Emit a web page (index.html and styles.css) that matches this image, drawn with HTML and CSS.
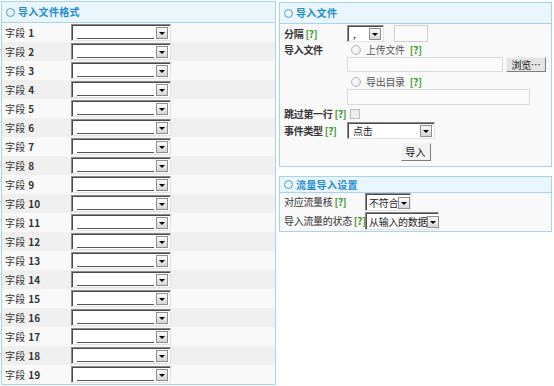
FILE: index.html
```html
<!DOCTYPE html>
<html lang="zh">
    <head>
        <title>导入</title>
        <meta charset="utf-8">
        <link rel="stylesheet" href="styles.css">
    </head>
    <body>
        <div class="page">
            <div class="panel left">
                <div class="head"><i class="dot"></i>导入文件格式</div>
                <div class="fields">
                    <div class="row"><span class="lbl">字段 <b>1</b></span><div class="sel w100"><span class="blank"></span><i class="arr"></i></div></div>
                    <div class="row"><span class="lbl">字段 <b>2</b></span><div class="sel w100"><span class="blank"></span><i class="arr"></i></div></div>
                    <div class="row"><span class="lbl">字段 <b>3</b></span><div class="sel w100"><span class="blank"></span><i class="arr"></i></div></div>
                    <div class="row"><span class="lbl">字段 <b>4</b></span><div class="sel w100"><span class="blank"></span><i class="arr"></i></div></div>
                    <div class="row"><span class="lbl">字段 <b>5</b></span><div class="sel w100"><span class="blank"></span><i class="arr"></i></div></div>
                    <div class="row"><span class="lbl">字段 <b>6</b></span><div class="sel w100"><span class="blank"></span><i class="arr"></i></div></div>
                    <div class="row"><span class="lbl">字段 <b>7</b></span><div class="sel w100"><span class="blank"></span><i class="arr"></i></div></div>
                    <div class="row"><span class="lbl">字段 <b>8</b></span><div class="sel w100"><span class="blank"></span><i class="arr"></i></div></div>
                    <div class="row"><span class="lbl">字段 <b>9</b></span><div class="sel w100"><span class="blank"></span><i class="arr"></i></div></div>
                    <div class="row"><span class="lbl">字段 <b>10</b></span><div class="sel w100"><span class="blank"></span><i class="arr"></i></div></div>
                    <div class="row"><span class="lbl">字段 <b>11</b></span><div class="sel w100"><span class="blank"></span><i class="arr"></i></div></div>
                    <div class="row"><span class="lbl">字段 <b>12</b></span><div class="sel w100"><span class="blank"></span><i class="arr"></i></div></div>
                    <div class="row"><span class="lbl">字段 <b>13</b></span><div class="sel w100"><span class="blank"></span><i class="arr"></i></div></div>
                    <div class="row"><span class="lbl">字段 <b>14</b></span><div class="sel w100"><span class="blank"></span><i class="arr"></i></div></div>
                    <div class="row"><span class="lbl">字段 <b>15</b></span><div class="sel w100"><span class="blank"></span><i class="arr"></i></div></div>
                    <div class="row"><span class="lbl">字段 <b>16</b></span><div class="sel w100"><span class="blank"></span><i class="arr"></i></div></div>
                    <div class="row"><span class="lbl">字段 <b>17</b></span><div class="sel w100"><span class="blank"></span><i class="arr"></i></div></div>
                    <div class="row"><span class="lbl">字段 <b>18</b></span><div class="sel w100"><span class="blank"></span><i class="arr"></i></div></div>
                    <div class="row"><span class="lbl">字段 <b>19</b></span><div class="sel w100"><span class="blank"></span><i class="arr"></i></div></div>
                </div>
            </div>

            <div class="side">
                <div class="panel import">
                    <div class="head"><i class="dot"></i>导入文件</div>
                    <div class="form">
                        <span class="flbl">分隔 <em>[?]</em></span>
                        <div class="line">
                            <div class="sel w37"><span class="val">,</span><i class="arr"></i></div>
                            <span class="txt w34"></span>
                        </div>

                        <span class="flbl top">导入文件</span>
                        <div class="stack">
                            <label class="radio"><i class="rad"></i>上传文件 <em>[?]</em></label>
                            <div class="fileline">
                                <span class="txt w156"></span>
                                <span class="btn browse">浏览…</span>
                            </div>
                            <label class="radio second"><i class="rad"></i>导出目录 <em>[?]</em></label>
                            <span class="txt w183"></span>
                        </div>

                        <span class="flbl short">跳过第一行 <em>[?]</em></span>
                        <div class="line short"><i class="chk"></i></div>

                        <span class="flbl">事件类型 <em>[?]</em></span>
                        <div class="line">
                            <div class="sel w88"><span class="val">点击</span><i class="arr"></i></div>
                        </div>
                    </div>
                    <div class="submit"><span class="btn go">导入</span></div>
                </div>

                <div class="panel flow">
                    <div class="head"><i class="dot"></i>流量导入设置</div>
                    <div class="form2">
                        <span class="plain">对应流量核 <em>[?]</em></span>
                        <div class="sel w46"><span class="val">不符合</span><i class="arr"></i></div>
                        <span class="plain">导入流量的状态 <em>[?]</em></span>
                        <div class="sel w72"><span class="val">从输入的数据</span><i class="arr"></i></div>
                    </div>
                </div>
            </div>
        </div>
    </body>
</html>
```

FILE: styles.css
```css
body {
    margin: 0;
    background: #fff;
    font: 10px/14px "Noto Sans CJK SC", "DejaVu Sans", sans-serif;
    letter-spacing: 0.3px;
    color: #333;
}
.page {
    display: flex;
    gap: 3px;
    padding: 1px 0 0 1px;
}
.panel {
    border: 1px solid #a6d3ef;
    background: #f9f9f9;
    box-sizing: border-box;
}
.left {
    width: 275px;
}
.side {
    width: 273px;
    display: flex;
    flex-direction: column;
    gap: 9px;
    padding-top: 1px;
}
.head {
    height: 20px;
    display: flex;
    align-items: center;
    gap: 3px;
    padding-left: 4px;
    border-bottom: 1px solid #a6d3ef;
    background: repeating-conic-gradient(#e3f3fb 0 25%, #eff9fd 0 50%) 0 0/2px 2px;
    color: #1f8ccd;
    font-weight: bold;
    white-space: nowrap;
}
.flow .head {
    height: 15px;
}
.dot {
    width: 7px;
    height: 7px;
    border-radius: 50%;
    border: 1px solid #4a9fd6;
    background: radial-gradient(circle at 40% 40%, #fff, #cfe6f5);
}
.row {
    height: 19px;
    display: flex;
    align-items: center;
    padding-left: 3px;
}
.row:nth-child(even) {
    background: repeating-conic-gradient(#ebebeb 0 25%, #f4f4f4 0 50%) 0 0/2px 2px;
}
.lbl {
    width: 66px;
    white-space: nowrap;
}
.lbl b {
    color: #333;
}

/* fake select */
.sel {
    display: inline-flex;
    align-items: center;
    height: 17px;
    box-sizing: border-box;
    background: #fff;
    border: 1px solid;
    border-color: #8a8a8a #e2e2e2 #e2e2e2 #8a8a8a;
    box-shadow: inset 1px 1px 0 #4a4a4a;
    padding: 1px 2px 0 5px;
}
.sel .blank {
    flex: 1;
    height: 10px;
    border-bottom: 1px solid #555;
    margin-right: 2px;
}
.sel .val {
    flex: 1;
    white-space: nowrap;
    color: #222;
}
.arr {
    flex: none;
    width: 12px;
    height: 12px;
    box-sizing: border-box;
    border: 1px solid #8f8f8f;
    background: linear-gradient(#fbfbfb, #d6d6d6);
    display: flex;
    align-items: center;
    justify-content: center;
}
.arr::after {
    content: "";
    border-left: 3px solid transparent;
    border-right: 3px solid transparent;
    border-top: 3px solid #000;
    margin-top: 1px;
}
.w100 { width: 100px; }
.w37 { width: 37px; }
.w88 { width: 88px; }
.w46 { width: 46px; padding-left: 3px; }
.w72 { width: 74px; padding-left: 3px; }

em {
    font-style: normal;
    font-weight: bold;
    color: #3a9a24;
}
.form {
    display: grid;
    grid-template-columns: 63px 1fr;
    row-gap: 1px;
    padding: 1px 0 0 4px;
    letter-spacing: -0.3px;
}
.flbl {
    font-weight: bold;
    line-height: 17px;
    white-space: nowrap;
}
.flbl.top {
    line-height: 14px;
}
.flbl.short {
    line-height: 15px;
}
.line {
    display: flex;
    align-items: center;
    gap: 3px;
    height: 17px;
}
.line.short {
    height: 15px;
}
.line .w34 {
    margin-left: 7px;
}
.stack {
    display: flex;
    flex-direction: column;
}
.fileline {
    display: flex;
    align-items: center;
    gap: 3px;
}
.txt {
    display: inline-block;
    height: 15px;
    box-sizing: border-box;
    border: 1px solid #dadada;
    background: #fafafa;
}
.w34 { width: 34px; height: 17px; border-color: #cfcfcf; }
.w156 { width: 156px; }
.w183 { width: 183px; height: 16px; }
.radio {
    display: flex;
    align-items: center;
    gap: 5px;
    padding-left: 4px;
    height: 14px;
    color: #555;
    white-space: nowrap;
}
.radio.second {
    margin-top: 3px;
}
.rad {
    width: 8px;
    height: 8px;
    border-radius: 50%;
    border: 1px solid #b8b8b8;
    background: radial-gradient(circle at 40% 40%, #fff, #dcdcdc);
}
.chk {
    width: 8px;
    height: 8px;
    margin-left: 3px;
    border: 1px solid #bdbdbd;
    background: #eee;
}
.btn {
    display: inline-block;
    box-sizing: border-box;
    border: 1px solid;
    border-color: #f4f4f4 #7d7d7d #7d7d7d #f4f4f4;
    background: #e4e4e4;
    color: #111;
    text-align: center;
}
.browse {
    width: 40px;
    height: 15px;
    line-height: 13px;
}
.submit {
    display: flex;
    justify-content: center;
    padding: 4px 0 5px;
}
.go {
    width: 30px;
    height: 18px;
    line-height: 16px;
    background: #f1f1f1;
}
.form2 {
    display: grid;
    grid-template-columns: 81px auto;
    justify-content: start;
    align-items: center;
    row-gap: 1px;
    padding: 0 0 1px 4px;
    letter-spacing: -0.3px;
}
.form2 .sel {
    height: 18px;
}
.plain {
    color: #333;
    white-space: nowrap;
}
```
